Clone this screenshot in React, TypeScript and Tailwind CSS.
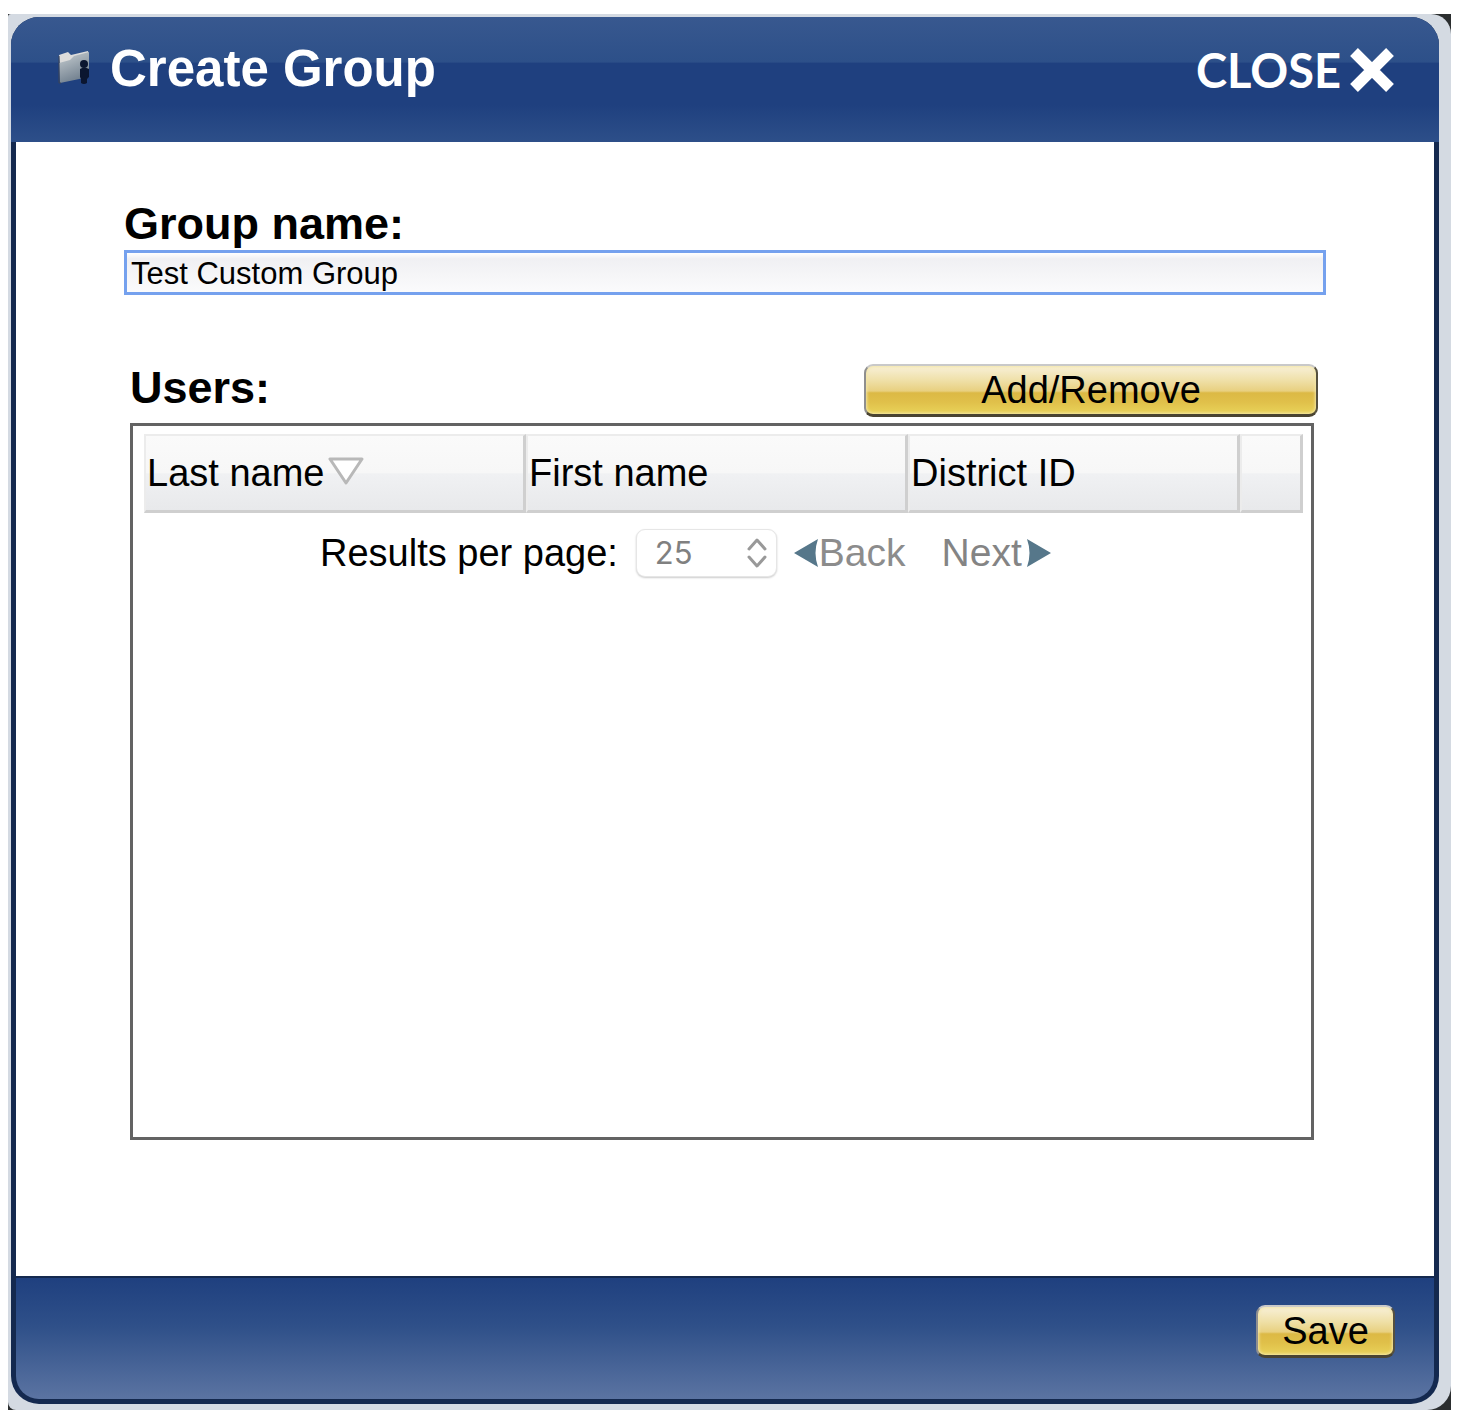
import React, { useState } from 'react';

const PAGE_SIZES = [10, 25, 50, 100];

const COLUMNS = [
  { key: 'lastName', label: 'Last name', width: 'w-auto' },
  { key: 'firstName', label: 'First name', width: 'w-auto' },
  { key: 'districtId', label: 'District ID', width: 'w-[332px]' },
  { key: 'actions', label: '', width: 'w-[63px]' },
];

// ─── Icons ───────────────────────────────────────────────────────────────────

const FolderUserIcon: React.FC = () => (
  <svg width="36" height="38" viewBox="0 0 36 38" aria-hidden="true">
    <defs>
      <linearGradient id="folder" x1="0" y1="0" x2="0.4" y2="1">
        <stop offset="0" stopColor="#c9d0d3" />
        <stop offset="1" stopColor="#71808f" />
      </linearGradient>
    </defs>
    <path d="M2 5 L11 2 L14 5 L31 1 L32 7 L16 12 L3 15 Z" fill="#dcdcdb" />
    <path d="M2 13 L13 10 L17 6 L32 2 L32 27 L3 33 Z" fill="url(#folder)" />
    <path d="M2 6 V33 L4 33" fill="none" stroke="#3c4556" strokeWidth="1" />
    <circle cx="27" cy="14" r="4" fill="#0b1630" />
    <path d="M23 19 Q27 16 32 19 V27 L30 29 V33 Q27 35 24 33 V29 L23 27 Z" fill="#0b1630" />
  </svg>
);

const CloseIcon: React.FC = () => (
  <svg width="46" height="48" viewBox="0 0 46 48" aria-hidden="true">
    <path d="M5 6 L41 42 M41 6 L5 42" stroke="#ffffff" strokeWidth="11" />
  </svg>
);

const SortIcon: React.FC = () => (
  <svg width="36" height="28" viewBox="0 0 36 28" className="mb-1" aria-hidden="true">
    <path d="M2 2 H34 L18 26 Z" fill="#ffffff" stroke="#b8b8b8" strokeWidth="3" strokeLinejoin="round" />
  </svg>
);

const ArrowIcon: React.FC<{ className?: string }> = ({ className = '' }) => (
  <svg width="25" height="30" viewBox="0 0 25 30" className={className} aria-hidden="true">
    <path d="M0 15 L24 1 Q19 15 24 29 Z" fill="#56778a" />
  </svg>
);

// ─── Shared pieces ───────────────────────────────────────────────────────────

interface GoldButtonProps {
  className: string;
  children: React.ReactNode;
}

const GoldButton: React.FC<GoldButtonProps> = ({ className, children }) => (
  <button
    type="button"
    className={`h-[53px] rounded-[9px] border-2 border-t-[#c9c9c9] border-l-[#8f8f8f] border-r-[#55503f] border-b-[#4a4432] border-b-3 bg-[linear-gradient(180deg,#f8f0d8_0%,#efe0a8_30%,#e8d080_52%,#dcb945_56%,#e0c04a_75%,#e9d35a_100%)] text-[38px] leading-[48px] shadow-[inset_0_0_3px_1px_#f3e6a8] ${className}`}
  >
    {children}
  </button>
);

// ─── Component ───────────────────────────────────────────────────────────────

const CreateGroupDialog: React.FC = () => {
  const [groupName, setGroupName] = useState('Test Custom Group');
  const [pageSize, setPageSize] = useState(25);

  return (
    <section
      aria-labelledby="dialog-title"
      className="flex flex-col overflow-hidden rounded-[28px] bg-[#14294f]"
    >
      <header className="flex h-[125px] items-start justify-between bg-[linear-gradient(180deg,#38588f_0%,#2d5089_36%,#1f407f_37%,#1f407f_70%,#2d4f89_100%)] pt-5 pr-11 pl-[46px] text-white">
        <div className="flex h-16 items-center gap-[17px]">
          <FolderUserIcon />
          <h1 id="dialog-title" className="text-[51px] leading-[64px] font-bold">
            Create Group
          </h1>
        </div>
        <button
          type="button"
          className="flex h-[66px] items-center gap-2 font-['Lato',sans-serif] text-[47px] leading-[66px] font-bold"
        >
          CLOSE
          <CloseIcon />
        </button>
      </header>

      <div className="mx-[5px] bg-white px-[108px] pt-14 pb-[136px]">
        <label htmlFor="group-name" className="block text-[45px] leading-[52px] font-bold">
          Group name:
        </label>
        <input
          id="group-name"
          type="text"
          value={groupName}
          onChange={(e) => setGroupName(e.target.value)}
          className="block h-[45px] w-full border-3 border-[#75a1ee] bg-[linear-gradient(180deg,#ffffff_0%,#f0f0f3_15%,#fbfbfc_100%)] px-1 pt-[3px] text-[31px] outline-none"
        />

        <div className="mt-[69px] mr-2 ml-1.5 flex items-start justify-between">
          <h2 className="text-[45px] leading-[48px] font-bold">Users:</h2>
          <GoldButton className="w-[454px]">Add/Remove</GoldButton>
        </div>

        <div className="mt-1.5 mr-3 ml-1.5 h-[717px] border-3 border-[#636363] pt-2 pr-2 pl-[11px]">
          <table className="w-full table-fixed border-separate border-spacing-0 text-[38px]">
            <thead>
              <tr>
                {COLUMNS.map((col) => (
                  <th
                    key={col.key}
                    scope="col"
                    className={`h-[79px] border-2 border-t-[#ececec] border-r-[#cfcfcf] border-b-[#cfcfcf] border-l-[#ececec] border-r-3 border-b-3 bg-[linear-gradient(180deg,#fafafa_0%,#f7f7f7_50%,#f0f1f3_51%,#e8e9eb_100%)] px-px text-left font-normal whitespace-nowrap ${col.width}`}
                  >
                    <span className="flex items-center gap-1">
                      {col.label}
                      {col.key === 'lastName' && <SortIcon />}
                    </span>
                  </th>
                ))}
              </tr>
            </thead>
          </table>

          <div className="mt-4 flex h-12 items-center pl-[176px] text-[38px]">
            <label htmlFor="page-size">Results per page:</label>
            <div className="relative ml-[18px]">
              <select
                id="page-size"
                disabled
                value={pageSize}
                onChange={(e) => setPageSize(Number(e.target.value))}
                className="block h-12 w-[141px] appearance-none rounded-[9px] border border-[#e6e6e6] bg-white pl-[18px] font-['Inter',sans-serif] text-[31px] leading-[46px] text-[#808080] shadow-[0_1px_2px_#cccccc]"
              >
                {PAGE_SIZES.map((size) => (
                  <option key={size} value={size}>
                    {size}
                  </option>
                ))}
              </select>
              <svg
                width="20"
                height="30"
                viewBox="0 0 20 30"
                className="pointer-events-none absolute top-[9px] right-[10px]"
                aria-hidden="true"
              >
                <path
                  d="M2 11 L10 2 L18 11 M2 19 L10 28 L18 19"
                  fill="none"
                  stroke="#999999"
                  strokeWidth="3"
                  strokeLinecap="round"
                  strokeLinejoin="round"
                />
              </svg>
            </div>
            <button type="button" disabled className="ml-[17px] flex items-center text-[39px] text-[#8c8c8c]">
              <ArrowIcon />
              Back
            </button>
            <button type="button" disabled className="ml-9 flex items-center gap-1 text-[39px] text-[#848484]">
              Next
              <ArrowIcon className="rotate-180" />
            </button>
          </div>
        </div>
      </div>

      <footer className="mx-[5px] mt-0.5 mb-[5px] flex h-[121px] items-start justify-end rounded-b-[23px] bg-[linear-gradient(180deg,#1f407f_0%,#2f5089_40%,#5b74a2_100%)] pt-[27px] pr-[39px]">
        <GoldButton className="w-[139px]">Save</GoldButton>
      </footer>
    </section>
  );
};

export default function App() {
  return (
    <main className="bg-white pt-3.5 pr-[11px] pl-2 font-['Liberation_Sans',Arial,sans-serif] text-black">
      <div className="bg-[#2b2e2f]">
        <div className="rounded-tl-[3px] rounded-tr-[20px] rounded-br-[24px] rounded-bl-[8px] bg-[#d4dae2] pt-[3px] pr-3 pb-1.5 pl-[3px]">
          <CreateGroupDialog />
        </div>
      </div>
    </main>
  );
}
